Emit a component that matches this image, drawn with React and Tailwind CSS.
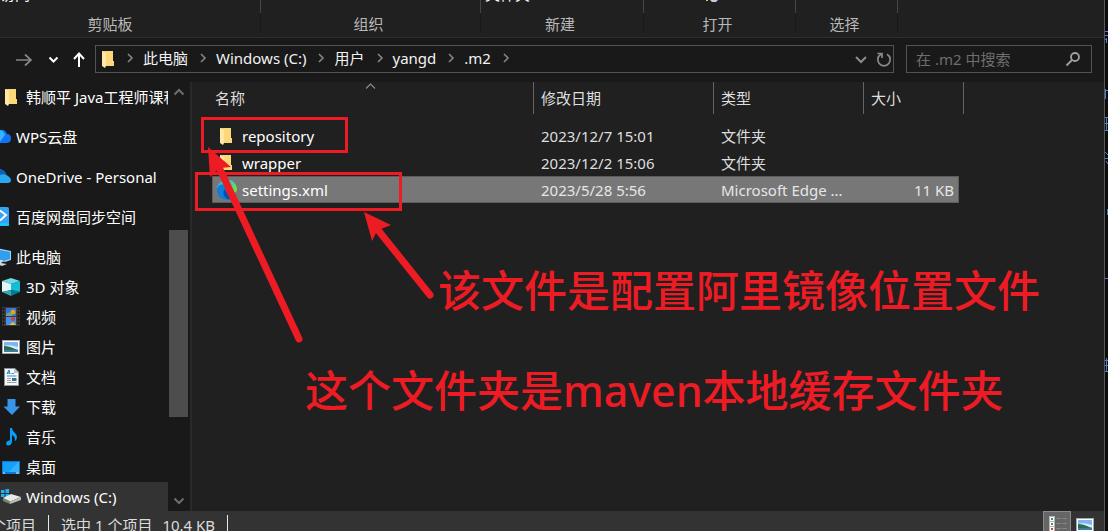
import React from 'react';

const sans = "font-['Noto_Sans','Noto_Sans_CJK_SC',sans-serif]";

function FolderIcon({ className = 'w-4 h-5' }) {
  return (
    <svg viewBox="0 0 16 20" className={className} aria-hidden="true">
      <path d="M3 2H14V12H15V17H3Z" fill="#f3c95f" />
      <path d="M6 2H14V12H15V17H6Z" fill="#fbd97a" />
      <path d="M3 2L7 4V17L6 19L3 17Z" fill="#ffe9a6" />
    </svg>
  );
}

function Chevron({ d = 'M1 1L5 5L1 9', className = 'w-[7px] h-[10px]', box = '0 0 7 10', w = 1.6 }) {
  return (
    <svg viewBox={box} className={className} fill="none" stroke="currentColor" strokeWidth={w} aria-hidden="true">
      <path d={d} />
    </svg>
  );
}

function EdgeIcon() {
  return (
    <svg viewBox="0 0 20 20" className="w-5 h-5" aria-hidden="true">
      <defs>
        <linearGradient id="edgeTop" x1="0" y1="0" x2="1" y2="0.6">
          <stop offset="0" stopColor="#2fa6e6" />
          <stop offset="0.6" stopColor="#3ccdb8" />
          <stop offset="1" stopColor="#6fe04c" />
        </linearGradient>
      </defs>
      <path d="M0 10A10 10 0 0 1 20 9Q20 13 16 13H8Z" fill="url(#edgeTop)" />
      <path d="M0 10C0 5 5 3.500 9 5C12 6 13 8 12 10C11 13 14 15 18.500 14C16 19 11 20.500 7 19.500C3 18.500 0 15 0 10Z" fill="#0f7fdc" />
      <path d="M8 9C4 13 8 19 12 19.500C15 19.300 17.500 17 18.500 14C14 16 9 14 8 9Z" fill="#0b4fa8" />
    </svg>
  );
}

const icons = {
  folder: <FolderIcon className="w-[18px] h-5" />,
  wps: (
    <svg viewBox="0 0 20 20" className="w-5 h-5">
      <path d="M9 3Q14 2 16 7Q20 7 20 11.500Q20 16 15 16H7V4Z" fill="#1372f2" />
      <path d="M0 16V5Q4 1 9 3Q13 4 14 8L8 16Z" fill="#35b4ff" />
    </svg>
  ),
  onedrive: (
    <svg viewBox="0 0 20 20" className="w-5 h-5">
      <path d="M0 12V5Q4 1 10 2Q15 4 16 9L8 14Z" fill="#0f62b5" />
      <path d="M0 16V11L9 8Q13 6 17 9Q20 11 20 13Q20 16 17 16Z" fill="#29a8ef" />
    </svg>
  ),
  baidu: (
    <svg viewBox="0 0 20 20" className="w-5 h-5">
      <rect x="-2" y="0" width="20" height="19" rx="2" fill="#36a3f7" />
      <path d="M0 17.500H18" stroke="#12cdf8" strokeWidth="2.500" />
      <path d="M9 3.500L15 8L9 13.500" fill="none" stroke="#fff" strokeWidth="2" />
    </svg>
  ),
  pc: (
    <svg viewBox="0 0 20 20" className="w-5 h-5">
      <path d="M0 0L20 4V13L14 15L0 11Z" fill="#9fd4f3" />
      <path d="M0 1L19 5V12L13 14L0 10Z" fill="#2f9fee" />
      <path d="M6 12L13 14L10 16L16 17L11 19L4 16Z" fill="#cfd6db" />
    </svg>
  ),
  cube: (
    <svg viewBox="0 0 20 20" className="w-5 h-5">
      <path d="M1 4L10 1L19 4L10 7Z" fill="#6fdbe4" />
      <path d="M1 4L10 7V13L1 15Z" fill="#dff8fa" />
      <path d="M10 7L19 4V15L10 13Z" fill="#14bdd3" />
      <path d="M1 15L10 13V19Z" fill="#3aa5b4" />
      <path d="M10 13L19 15L10 19Z" fill="#047d92" />
    </svg>
  ),
  video: (
    <svg viewBox="0 0 20 20" className="w-5 h-5">
      <rect x="1" y="0" width="18" height="19" fill="#3a3a3a" />
      <path d="M2.500 1V19M17.500 1V19" stroke="#111" strokeWidth="1.500" strokeDasharray="2 1.500" />
      <rect x="5" y="1" width="10" height="8" fill="#3471e0" />
      <rect x="5" y="10" width="10" height="8" fill="#4a8cf0" />
      <circle cx="12" cy="5" r="2.500" fill="#d8a51b" />
      <path d="M5 7L9 5L12 9H5Z" fill="#55b86c" />
      <circle cx="12" cy="12" r="2" fill="#d3422f" />
      <path d="M8 18L12 15L15 18Z" fill="#e8c425" />
      <circle cx="7" cy="8" r="1" fill="#ea5fb0" />
    </svg>
  ),
  picture: <PictureIcon />,
  doc: (
    <svg viewBox="0 0 20 20" className="w-5 h-5">
      <path d="M3 1H14L18 5V19H3Z" fill="#8e9295" />
      <path d="M4 2H13.500L17 5.500V18H4Z" fill="#f6f8fa" />
      <path d="M13 2V6H17Z" fill="#b9bec2" />
      <path d="M6 7L8 3L9 7M6.500 6H9" stroke="#1383cf" strokeWidth="1" fill="none" />
      <path d="M10.500 6.500H13M6 9H15.500" stroke="#2f8fd4" />
      <path d="M6 11.500H10M6 13.500H10M6 15.500H15.500" stroke="#9aa0a4" />
      <rect x="11" y="11" width="4.500" height="3" fill="#3d6e92" />
    </svg>
  ),
  download: (
    <svg viewBox="0 0 20 20" className="w-5 h-5">
      <path d="M6.500 2H14.500V9.500H19L11 18L2.500 9.500H6.500Z" fill="#3695e8" />
    </svg>
  ),
  music: (
    <svg viewBox="0 0 20 20" className="w-5 h-5">
      <path d="M9 1H11C11 5 16 6 16 10Q16 13 13.500 14Q15 10 11 8V15Q10 19 6.500 18.500Q4 17 6 14.500Q7.500 13 9 13.500Z" fill="#0a9bfb" />
    </svg>
  ),
  desktop: (
    <svg viewBox="0 0 20 20" className="w-5 h-5">
      <rect x="1" y="4" width="18" height="13" fill="#1077d2" />
      <rect x="2" y="5" width="16" height="10" fill="#12a0fb" />
      <path d="M8 15L17 5H18V15Z" fill="#38b0fc" />
      <path d="M2 16H4M15 16H18" stroke="#e4f4ff" />
    </svg>
  ),
  drive: (
    <svg viewBox="0 0 20 20" className="w-5 h-5">
      <path d="M0 3H3.500V6H0ZM4.500 2H8V6H4.500ZM0 7H3.500V10H0ZM4.500 7H8V10H4.500Z" fill="#19b5f4" />
      <path d="M2 11L10 7L20 10L9 14.500Z" fill="#e9e9e9" />
      <path d="M2 11L9 14.500V17L2 14Z" fill="#7c7f7c" />
      <path d="M9 14.500L20 10V13L9 17Z" fill="#b9bcbd" />
      <path d="M5 13.700L8 15" stroke="#26c13a" strokeWidth="1.200" />
    </svg>
  ),
};

function PictureIcon() {
  return (
    <svg viewBox="0 0 20 20" className="w-5 h-5" aria-hidden="true">
      <rect x="1" y="3" width="18" height="14" fill="#a5a9ab" />
      <rect x="2" y="4" width="16" height="12" fill="#fff" />
      <rect x="3" y="5" width="14" height="10" fill="#7fb4f5" />
      <path d="M3 9Q8 7 17 10V12H3Z" fill="#d4ecfa" />
      <path d="M3 9Q9 9 16 13H3Z" fill="#2c6a52" />
      <path d="M3 13H17V15H3Z" fill="#3e7d9c" />
    </svg>
  );
}

const groups = [
  { name: '剪贴板', width: 'w-[261px]', label: 'pr-10', command: '访问', indent: 'left-0' },
  { name: '组织', width: 'w-[220px]', label: 'pr-1' },
  { name: '新建', width: 'w-[163px]', label: 'pr-1', command: '文件夹', indent: 'left-1' },
  { name: '打开', width: 'w-[152px]', label: 'pr-1', history: true },
  { name: '选择', width: 'w-[102px]', label: 'pr-1' },
];

function Ribbon() {
  return (
    <div className="flex h-[38px] shrink-0 overflow-hidden border-b border-[#2d2d2d] bg-[#202020]">
      {groups.map((g) => (
        <div key={g.name} className={`${g.width} relative flex shrink-0`}>
          {g.command && (
            <span className={`absolute -top-4 ${g.indent} text-white`}>{g.command}</span>
          )}
          {g.history && (
            <svg viewBox="0 0 16 2" className="absolute top-0 left-[61px] h-[2px] w-4">
              <path d="M1 0H3V1H1Z" fill="#e8c34f" />
              <path d="M5 0H13L11 2H7Z" fill="#c3ccd3" />
            </svg>
          )}
          <div className={`flex flex-1 flex-col items-center justify-end pb-[3px] text-[#b8b8b8] ${g.label}`}>
            {g.name}
          </div>
          <div className="flex w-px flex-col">
            <div className="h-[13px] bg-[#454545]" />
            <div className="h-5 bg-[#181818]" />
          </div>
        </div>
      ))}
    </div>
  );
}

const tree = [
  { icon: 'folder', label: '韩顺平 Java工程师课程', child: true },
  { icon: 'wps', label: 'WPS云盘' },
  { icon: 'onedrive', label: 'OneDrive - Personal' },
  { icon: 'baidu', label: '百度网盘同步空间' },
  { icon: 'pc', label: '此电脑' },
  { icon: 'cube', label: '3D 对象', child: true },
  { icon: 'video', label: '视频', child: true },
  { icon: 'picture', label: '图片', child: true },
  { icon: 'doc', label: '文档', child: true },
  { icon: 'download', label: '下载', child: true },
  { icon: 'music', label: '音乐', child: true },
  { icon: 'desktop', label: '桌面', child: true },
  { icon: 'drive', label: 'Windows (C:)', child: true, active: true },
];

const files = [
  { name: 'repository', date: '2023/12/7 15:01', type: '文件夹', size: '' },
  { name: 'wrapper', date: '2023/12/2 15:06', type: '文件夹', size: '' },
  { name: 'settings.xml', date: '2023/5/28 5:56', type: 'Microsoft Edge ...', size: '11 KB', selected: true },
];

function AddressBar() {
  const crumbs = ['此电脑', 'Windows (C:)', '用户', 'yangd', '.m2'];
  return (
    <div className="flex h-11 shrink-0 items-start bg-[#191919] pt-[7px] pr-3 pl-4">
      <button aria-label="前进" className="flex h-7 w-4 items-center text-[#858585]">
        <Chevron className="h-4 w-4" box="0 0 16 16" d="M0 9H15M9 3.500L15 9L9 14.500" w={1.7} />
      </button>
      <button aria-label="最近位置" className="ml-4 flex h-7 w-3 items-center text-white">
        <Chevron className="h-3 w-3" box="0 0 12 12" d="M1.500 4.500L5.500 8.500L9.500 4.500" w={2} />
      </button>
      <button aria-label="上移" className="ml-3 flex h-7 w-4 items-center text-white">
        <Chevron className="h-4 w-4" box="0 0 16 16" d="M7 16V2.500M2 8L7 2.500L12 8" w={2} />
      </button>
      <div className="ml-[7px] flex h-7 min-w-0 flex-1 items-center border border-[#535353] pl-[3px] text-[#f2f2f2]">
        <FolderIcon className="h-5 w-4" />
        <nav className="ml-3 flex flex-1 items-center pb-[2px]" aria-label="路径">
          <span className="text-[#858585]"><Chevron /></span>
          {crumbs.map((c) => (
            <span key={c} className="ml-[9px] flex items-center gap-3 whitespace-nowrap">
              <button>{c}</button>
              <span className="text-[#858585]"><Chevron /></span>
            </span>
          ))}
        </nav>
        <button aria-label="历史" className="mr-[9px] text-[#8c8c8c]">
          <Chevron className="h-3 w-3" box="0 0 12 12" d="M1 4L6 9L11 4" w={2} />
        </button>
        <button aria-label="刷新" className="mr-px text-[#8c8c8c]">
          <svg viewBox="0 0 16 16" className="h-4 w-4" fill="none" stroke="currentColor" strokeWidth="1.700">
            <path d="M5 3.200A6.200 6.200 0 1 0 11 3.200" />
            <path d="M1.500 2.500H6V7" />
          </svg>
        </button>
      </div>
      <label className="ml-3 flex h-7 w-[186px] items-center border border-[#535353] pr-[10px] pb-px pl-[9px]">
        <input aria-label="搜索" placeholder="在 .m2 中搜索" className="min-w-0 flex-1 bg-transparent outline-none placeholder:text-[#6e6e6e]" />
        <svg viewBox="0 0 16 16" className="h-4 w-4" fill="none" stroke="#a0a0a0" strokeWidth="1.800">
          <circle cx="10" cy="6" r="4" />
          <path d="M7 9L1.500 14.500" />
        </svg>
      </label>
    </div>
  );
}

function Sidebar() {
  return (
    <aside className="flex w-[190px] shrink-0 overflow-hidden bg-[#191919]">
      <ul className="w-[168px] shrink-0 overflow-hidden">
        {tree.map((t) => (
          <li key={t.label} className={t.child ? '' : 'pt-[10px]'}>
            <a
              href="#"
              className={`flex h-[30px] items-center whitespace-nowrap text-white ${t.icon === 'folder' ? 'gap-[7px]' : 'gap-[5px]'} ${t.child ? 'pl-px' : '-ml-[9px]'} ${t.active ? 'bg-[#333333]' : ''}`}
            >
              <span className="shrink-0">{icons[t.icon]}</span>
              {t.label}
            </a>
          </li>
        ))}
      </ul>
      <div className="flex w-5 flex-col items-center pl-px text-[#6d6d6d]">
        <span className="flex h-5 items-center"><Chevron className="h-3 w-3" box="0 0 12 12" d="M1.500 8.500L6 4L10.500 8.500" w={2} /></span>
        <div className="flex w-full flex-1 flex-col">
          <div className="flex-[128]" />
          <div className="flex-[187] bg-[#4d4d4d]" />
          <div className="flex-[74]" />
        </div>
        <span className="flex h-5 items-center"><Chevron className="h-3 w-3" box="0 0 12 12" d="M1.500 3.500L6 8L10.500 3.500" w={2} /></span>
      </div>
    </aside>
  );
}

function FileTable() {
  const th = 'relative h-8 border-r border-[#636363] p-0 pl-[7px] text-left font-normal text-[#dedede]';
  return (
    <table className="w-[772px] table-fixed border-separate border-spacing-0">
      <colgroup>
        <col className="w-5" />
        <col className="w-[322px]" />
        <col className="w-[180px]" />
        <col className="w-[150px]" />
        <col className="w-[95px]" />
        <col className="w-[5px]" />
      </colgroup>
      <thead>
        <tr>
          <th colSpan={2} className={`${th} pl-[23px]`}>
            名称
            <span className="absolute top-px left-[173px] text-[#8f8f8f]">
              <Chevron className="block h-[6px] w-[11px]" box="0 0 11 6" d="M1 5.500L5.500 1L10 5.500" w={1.1} />
            </span>
          </th>
          <th className={th}>修改日期</th>
          <th className={th}>类型</th>
          <th colSpan={2} className={th}>大小</th>
        </tr>
      </thead>
      <tbody>
        <tr><td className="h-2 p-0" colSpan={6} /></tr>
        {files.map((f) => {
          const cell = `h-[27px] p-0 whitespace-nowrap ${f.selected ? 'border-y border-[#5c5c5c] bg-[#777777] text-[#e6e6e6]' : 'text-[#dedede]'}`;
          return (
            <tr key={f.name}>
              <td className="p-0" />
              <td className={`${cell} ${f.selected ? 'border-l' : ''}`}>
                <div className={`flex items-center text-white ${f.selected ? 'gap-[5px] pl-1' : 'gap-[9px] pl-[5px]'}`}>
                  {f.selected ? <EdgeIcon /> : <FolderIcon />}
                  {f.name}
                </div>
              </td>
              <td className={`${cell} pl-[7px]`}>{f.date}</td>
              <td className={`${cell} pl-[7px]`}>{f.type}</td>
              <td className={`${cell} pr-1 text-right ${f.selected ? 'border-r' : ''}`}>{f.size}</td>
              <td className="p-0" />
            </tr>
          );
        })}
      </tbody>
    </table>
  );
}

function StatusBar() {
  return (
    <footer className="flex h-5 shrink-0 items-start overflow-hidden bg-[#333333] text-[#dcdcdc]">
      <div className="flex flex-1 items-start pt-1 leading-5 whitespace-nowrap">
        <span className="-ml-[9px] w-[58px] border-r border-[#e8e8e8]">个项目</span>
        <span className="ml-3">选中 1 个项目</span>
        <span className="ml-[10px] border-r border-[#e8e8e8] pr-3">10.4 KB</span>
      </div>
      <button aria-label="详细信息" className="h-7 w-7 border border-[#8a8a8a] bg-[#666666] pl-[5px]">
        <svg viewBox="0 0 20 20" className="h-5 w-5">
          <path d="M0 1H6V20H0Z" fill="#b5b5b5" />
          <path d="M1 2H5V6H1ZM1 7H5V11H1ZM1 12H5V16H1Z" fill="#fff" />
          <path d="M2 3H4V5H2Z" fill="#3d88b5" />
          <path d="M2 8H4V10H2Z" fill="#71803c" />
          <path d="M2 13H4V15H2Z" fill="#d5402f" />
          <path d="M7 3.500H12M13 3.500H18M7 8.500H12M13 8.500H18M7 13.500H12M13 13.500H18" stroke="#868686" />
        </svg>
      </button>
      <button aria-label="大缩略图" className="mr-[9px] ml-1 pt-1"><PictureIcon /></button>
    </footer>
  );
}

function Annotations() {
  return (
    <div className="pointer-events-none absolute inset-0 text-[43px] leading-none font-medium whitespace-nowrap text-[#ed1c24]">
      <div className="absolute top-[117px] left-[201px] h-9 w-[147px] border-3 border-[#ed1c24]" />
      <div className="absolute top-[172px] left-[195px] h-[39px] w-[207px] border-3 border-[#ed1c24]" />
      <svg viewBox="0 0 460 360" className="absolute top-0 left-0 h-[360px] w-[460px]" fill="#ed1c24" stroke="#ed1c24">
        <path d="M218 165L299 339" strokeWidth="7" strokeLinecap="round" fill="none" />
        <path d="M208 147L231 167L221 168L216 171L210 177Z" stroke="none" />
        <path d="M378 230L430 295" strokeWidth="7" strokeLinecap="round" fill="none" />
        <path d="M364 212L391 225L381 229L376 233L372 241Z" stroke="none" />
      </svg>
      <p className="absolute top-[269px] left-[438px]">该文件是配置阿里镜像位置文件</p>
      <p className="absolute top-[369px] left-[305px]">这个文件夹是maven本地缓存文件夹</p>
    </div>
  );
}

export default function App() {
  return (
    <div className={`relative flex h-screen overflow-hidden bg-[#0c0c0c] text-[15px] leading-5 ${sans}`}>
      <div className="flex min-w-0 flex-1 flex-col border-r border-[#575757]">
        <Ribbon />
        <AddressBar />
        <div className="flex min-h-0 flex-1 bg-[#202020]">
          <Sidebar />
          <main className="min-w-0 flex-1 border-l-2 border-[#292929]">
            <FileTable />
          </main>
        </div>
        <StatusBar />
      </div>
      <div className="w-[3px] shrink-0">
        <svg viewBox="0 0 3 531" className="h-[531px] w-[3px]" fill="none" stroke="#4a80cc">
          <path d="M0 31.500H3M0 35.500H3M0 39.500H2M1.500 38V43M0.500 89V99M0 90.500H3M0 117.500H3M0 123.500H3M0 130.500H3M1.500 117V130M0 152L3 155M0 158.500H3M1 161L3 164M2.500 209V215M0 278.500H3M0 360.500H3M0 365.500H3M1.500 358V372M0 371.500H3" />
        </svg>
      </div>
      <Annotations />
    </div>
  );
}
